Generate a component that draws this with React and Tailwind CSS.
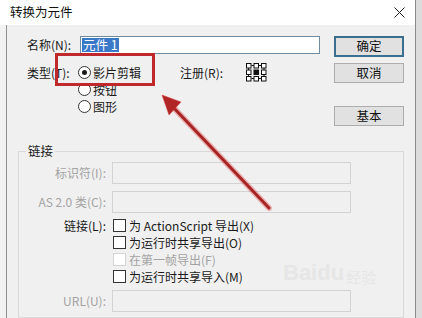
import React from "react";

const FONT = { fontFamily: '"Noto Sans CJK SC", "Noto Sans", sans-serif' };

function Radio({ checked }) {
  return (
    <span className="w-[13px] h-[13px] rounded-full border border-[#333] bg-white flex items-center justify-center shrink-0">
      {checked && <span className="w-[5px] h-[5px] rounded-full bg-[#1a1a1a]" />}
    </span>
  );
}

function Check({ disabled }) {
  return (
    <span
      className={
        "w-[13px] h-[13px] border bg-white shrink-0 " +
        (disabled ? "border-[#d4d4d4] bg-[#f3f3f3]" : "border-[#333]")
      }
    />
  );
}

function Btn({ children, primary }) {
  return (
    <div
      className={
        "w-[70px] flex items-center justify-center text-[12.5px] leading-none text-[#111] bg-[#e1e1e1] " +
        (primary ? "h-[21px] border-2 border-[#3a6f8f]" : "h-[20px] border border-[#adadad]")
      }
    >
      {children}
    </div>
  );
}

function RegGrid() {
  const pos = [0, 7.5, 15];
  const ys = [0.5, 7, 13.5];
  return (
    <svg width="21" height="19" viewBox="0 0 21 19" className="shrink-0">
      <g stroke="#111" strokeWidth="1">
        <line x1="5.5" y1="2.5" x2="8" y2="2.5" />
        <line x1="13" y1="2.5" x2="15.5" y2="2.5" />
        <line x1="5.5" y1="15.5" x2="8" y2="15.5" />
        <line x1="13" y1="15.5" x2="15.5" y2="15.5" />
        <line x1="2.5" y1="5" x2="2.5" y2="7.5" />
        <line x1="2.5" y1="11.5" x2="2.5" y2="14" />
        <line x1="18" y1="5" x2="18" y2="7.5" />
        <line x1="18" y1="11.5" x2="18" y2="14" />
      </g>
      {ys.map((y, r) =>
        pos.map((x, c) => (
          <rect
            key={r + "-" + c}
            x={x + 0.5}
            y={y}
            width="4.5"
            height="4.5"
            fill={r === 1 && c === 1 ? "#111" : "white"}
            stroke="#111"
            strokeWidth="1"
          />
        ))
      )}
    </svg>
  );
}

export default function App() {
  return (
    <div
      className="w-[422px] h-[318px] bg-[#f0f0f0] relative overflow-hidden text-[#1a1a1a] flex"
      style={FONT}
    >
      {/* main window */}
      <div className="w-[416px] flex flex-col border-r border-[#8a8a8a]">
        {/* title bar */}
        <div className="h-[25px] bg-white flex items-center justify-between pl-[10px] pr-[10px] shrink-0">
          <span className="text-[12.5px] leading-none text-[#111]">转换为元件</span>
          <svg width="11" height="11" viewBox="0 0 11 11">
            <path d="M0.5 0.5 L10.5 10.5 M10.5 0.5 L0.5 10.5" stroke="#222" strokeWidth="1" />
          </svg>
        </div>
        {/* body */}
        <div className="flex-1 flex">
          <div className="w-[6px] bg-[#f2f2f2]" />
          <div className="w-px bg-[#8f8f8f]" />
          <div className="flex-1 flex flex-col">
            {/* top block */}
            <div className="flex pt-[11px] pl-[20px]">
              <div className="w-[293px] flex flex-col">
                <div className="h-[18px] flex items-center">
                  <span className="w-[53px] text-[12px] leading-none">名称(N):</span>
                  <div className="w-[240px] h-[18px] border border-[#6e8ca3] bg-white flex items-center pl-[1px]">
                    <span className="bg-[#3a78c8] text-white text-[12.5px] leading-[14px] px-[1px]">元件 1</span>
                  </div>
                </div>
                <div className="mt-[10px] h-[17px] flex items-center">
                  <span className="w-[51px] text-[12px] leading-none">类型(T):</span>
                  <div className="w-[102px] flex items-center gap-[2px]">
                    <Radio checked />
                    <span className="text-[12px] leading-none">影片剪辑</span>
                  </div>
                  <span className="w-[66px] text-[12px] leading-none">注册(R):</span>
                  <RegGrid />
                </div>
                <div className="h-[17px] flex items-center pl-[51px] gap-[2px]">
                  <Radio />
                  <span className="text-[12px] leading-none">按钮</span>
                </div>
                <div className="h-[17px] flex items-center pl-[51px] gap-[2px]">
                  <Radio />
                  <span className="text-[12px] leading-none">图形</span>
                </div>
              </div>
              <div className="ml-[14px] flex flex-col">
                <Btn primary>确定</Btn>
                <div className="mt-[6px]">
                  <Btn>取消</Btn>
                </div>
                <div className="mt-[23px]">
                  <Btn>基本</Btn>
                </div>
              </div>
            </div>
            {/* group box */}
            <fieldset className="mt-[17px] ml-[11px] w-[386px] border border-[#d9d9d9] flex-1">
              <legend className="ml-[7px] px-[2px] text-[12.5px] leading-[16px]">链接</legend>
              <div className="flex flex-col pt-[3px]">
                <div className="h-[22px] flex items-center">
                  <span className="w-[87px] text-right text-[12px] leading-none text-[#a3a3a3]">标识符(I):</span>
                  <div className="ml-[6px] w-[239px] h-[22px] border border-[#d3d3d3] bg-[#f0f0f0]" />
                </div>
                <div className="mt-[7px] h-[22px] flex items-center">
                  <span className="w-[87px] text-right text-[12px] leading-none text-[#a3a3a3]">AS 2.0 类(C):</span>
                  <div className="ml-[6px] w-[239px] h-[22px] border border-[#d3d3d3] bg-[#f0f0f0]" />
                </div>
                <div className="mt-[4px] flex">
                  <div className="w-[87px] h-[17px] flex items-center justify-end">
                    <span className="text-[12px] leading-none">链接(L):</span>
                  </div>
                  <div className="ml-[7px] flex flex-col">
                    <div className="h-[17px] flex items-center gap-[3px]">
                      <Check />
                      <span className="text-[12px] leading-none">为 ActionScript 导出(X)</span>
                    </div>
                    <div className="h-[17px] flex items-center gap-[3px]">
                      <Check />
                      <span className="text-[12px] leading-none">为运行时共享导出(O)</span>
                    </div>
                    <div className="h-[17px] flex items-center gap-[3px]">
                      <Check disabled />
                      <span className="text-[12px] leading-none text-[#a3a3a3]">在第一帧导出(F)</span>
                    </div>
                    <div className="h-[17px] flex items-center gap-[3px]">
                      <Check />
                      <span className="text-[12px] leading-none">为运行时共享导入(M)</span>
                    </div>
                  </div>
                </div>
                <div className="mt-[5px] h-[22px] flex items-center">
                  <span className="w-[87px] text-right text-[12px] leading-none text-[#a3a3a3]">URL(U):</span>
                  <div className="ml-[6px] w-[239px] h-[22px] border border-[#d3d3d3] bg-[#f0f0f0]" />
                </div>
              </div>
            </fieldset>
          </div>
        </div>
      </div>
      <div className="flex-1 bg-[#dcdcdc]" />

      {/* watermark */}
      <div className="absolute left-[283px] top-[262px] flex items-end text-[#e6e6e6] pointer-events-none">
        <span className="text-[22px] font-bold leading-none" style={{ fontFamily: '"Liberation Sans", sans-serif' }}>
          Baidu
        </span>
        <span className="text-[15px] leading-none ml-[2px]">经验</span>
      </div>

      {/* red annotation box */}
      <div className="absolute left-[55px] top-[53px] w-[100px] h-[33px] border-[3px] border-[#c0292b] pointer-events-none" />

      {/* red arrow */}
      <svg className="absolute left-0 top-0 pointer-events-none" width="422" height="318" viewBox="0 0 422 318">
        <line x1="269" y1="208" x2="172" y2="106" stroke="rgba(220,60,60,0.35)" strokeWidth="6" strokeLinecap="round" />
        <line x1="269" y1="208" x2="172" y2="106" stroke="#a82424" strokeWidth="3" strokeLinecap="round" />
        <polygon points="162,95 181,102 169,115" fill="#b02626" stroke="rgba(220,60,60,0.5)" strokeWidth="1" />
      </svg>
    </div>
  );
}
